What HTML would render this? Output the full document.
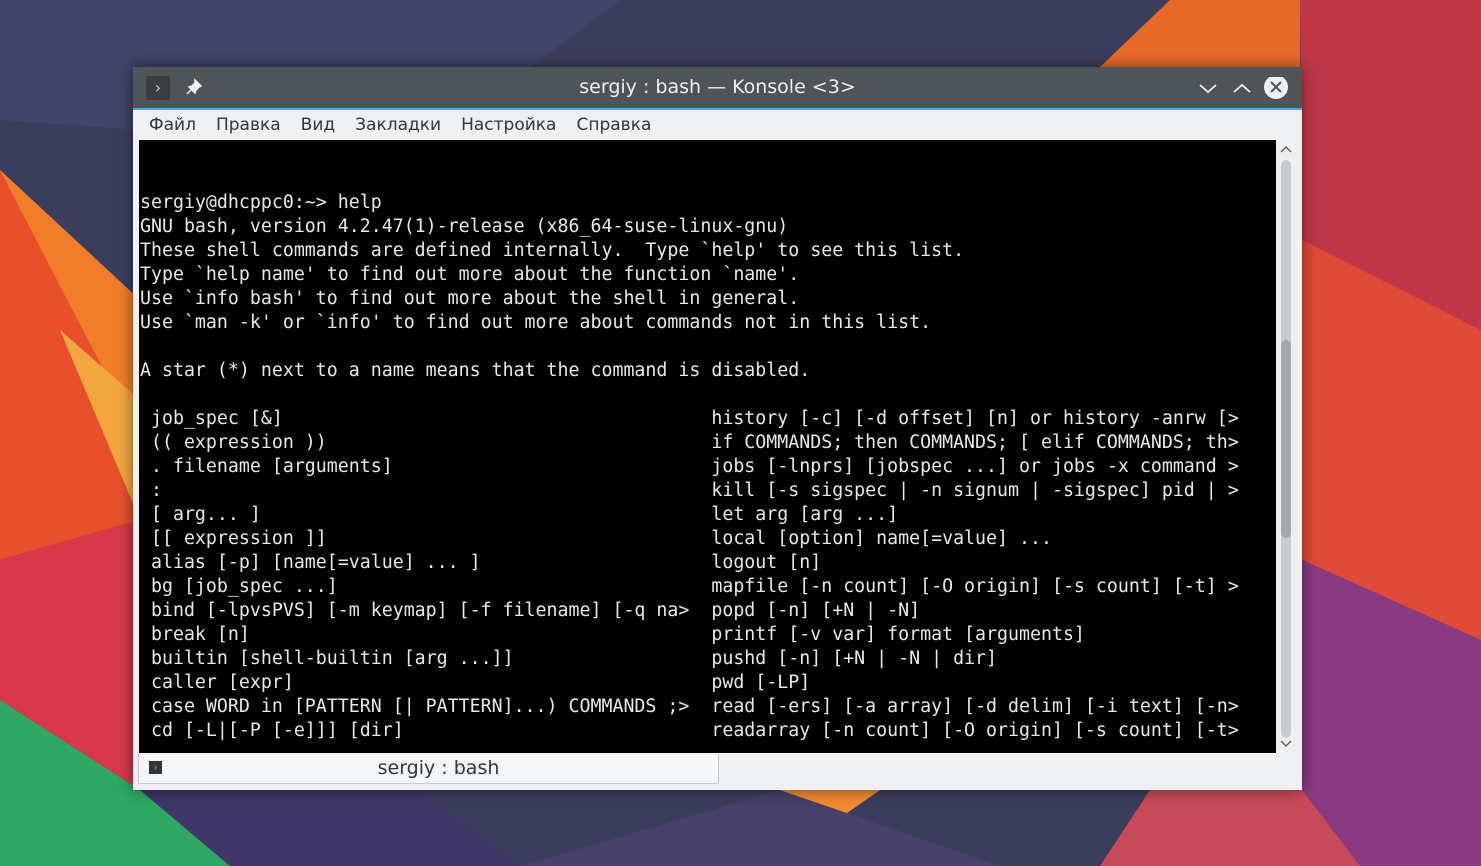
<!DOCTYPE html>
<html><head><meta charset="utf-8"><style>
html,body{margin:0;padding:0;width:1481px;height:866px;overflow:hidden;background:#3a3d5a;}
#bg{position:absolute;left:0;top:0}
.win{position:absolute;left:133px;top:67px;width:1169px;height:723px;background:#eff0f1;box-shadow:0 0 14px rgba(0,0,0,.5)}
.title{position:absolute;left:0;top:0;width:1169px;height:41px;background:#4e5457;border-bottom:2px solid #3daee9;}
.title .t{position:absolute;left:0;width:1169px;text-align:center;top:9px;color:#eff0f1;font:19px "DejaVu Sans",sans-serif}
.btn1{position:absolute;left:13px;top:9px;width:24px;height:24px;background:#3a3e41;border-radius:2px;color:#ccc;font:16px "DejaVu Sans",sans-serif;text-align:center;line-height:23px}
.menu{position:absolute;top:48px;left:16px;font:17px "DejaVu Sans",sans-serif;color:#31363b;white-space:nowrap}
.menu span{margin-right:20px}
.term{position:absolute;left:6px;top:73px;width:1137px;height:613px;background:#000;overflow:hidden}
pre{margin:0;position:absolute;font:18.25px/24px "DejaVu Sans Mono",monospace;color:#e8e8e8;top:3px;left:1px;white-space:pre}
.sb{position:absolute;left:1143px;top:73px;width:21px;height:613px}
.tab{position:absolute;left:5px;top:687px;width:579px;height:29px;border:1px solid #c8cacc;border-top:none;background:#f5f6f7;font:19px "DejaVu Sans",sans-serif;color:#31363b}
</style></head><body>
<svg id="bg" width="1481" height="866">
<rect width="1481" height="866" fill="#3b3d5c"/>
<polygon points="0,0 620,0 420,150 0,120" fill="#3f4468"/>
<polygon points="0,170 140,300 140,520 0,560" fill="#e8502c"/>
<polygon points="0,170 140,300 140,440" fill="#f07d2a"/>
<polygon points="60,330 140,400 140,520" fill="#f2a640"/>
<polygon points="0,560 140,520 140,790 0,700" fill="#d8384a"/>
<polygon points="0,700 140,790 230,866 0,866" fill="#2ea862"/>
<polygon points="230,866 140,790 420,790 520,866" fill="#3f3768"/>
<polygon points="1170,0 1300,0 1300,67 1100,67" fill="#e86a2a"/>
<polygon points="1300,0 1481,0 1481,330 1302,240" fill="#c03848"/>
<polygon points="1302,240 1481,330 1481,640 1302,560" fill="#e04a38"/>
<polygon points="1302,560 1481,640 1481,866 1302,866" fill="#8a3a80"/>
<polygon points="1150,790 1302,790 1360,866 1100,866" fill="#c84a5a"/>
<polygon points="780,790 880,790 830,825" fill="#f08a34"/>
<polygon points="520,866 780,790 1000,866" fill="#46406a"/>
</svg>
<div class="win">
 <div class="title"><div class="btn1">›</div>
  <svg style="position:absolute;left:52px;top:11px" width="18" height="18" viewBox="0 0 18 18"><path d="M10 2l6 6-2 1-3 3-1 3-6-6 3-1 3-3z M6 12l-4 4" fill="#eff0f1" stroke="#eff0f1" stroke-width="1.5"/></svg>
  <div class="t">sergiy : bash — Konsole &lt;3&gt;</div>
  <svg style="position:absolute;left:1064px;top:10px" width="100" height="22"><path d="M3 8l8 7 8-7" stroke="#eff0f1" stroke-width="1.8" fill="none"/><path d="M37 15l8-7 8 7" stroke="#eff0f1" stroke-width="1.8" fill="none"/><circle cx="79" cy="10" r="12" fill="#eff0f1"/><path d="M74 5l10 10M84 5l-10 10" stroke="#4e5457" stroke-width="2"/></svg>
 </div>
 <div class="menu"><span>Файл</span><span>Правка</span><span>Вид</span><span>Закладки</span><span>Настройка</span><span>Справка</span></div>
 <div class="term"><pre>


sergiy@dhcppc0:~&gt; help
GNU bash, version 4.2.47(1)-release (x86_64-suse-linux-gnu)
These shell commands are defined internally.  Type `help' to see this list.
Type `help name' to find out more about the function `name'.
Use `info bash' to find out more about the shell in general.
Use `man -k' or `info' to find out more about commands not in this list.

A star (*) next to a name means that the command is disabled.

 job_spec [&amp;]                                       history [-c] [-d offset] [n] or history -anrw [&gt;
 (( expression ))                                   if COMMANDS; then COMMANDS; [ elif COMMANDS; th&gt;
 . filename [arguments]                             jobs [-lnprs] [jobspec ...] or jobs -x command &gt;
 :                                                  kill [-s sigspec | -n signum | -sigspec] pid | &gt;
 [ arg... ]                                         let arg [arg ...]
 [[ expression ]]                                   local [option] name[=value] ...
 alias [-p] [name[=value] ... ]                     logout [n]
 bg [job_spec ...]                                  mapfile [-n count] [-O origin] [-s count] [-t] &gt;
 bind [-lpvsPVS] [-m keymap] [-f filename] [-q na&gt;  popd [-n] [+N | -N]
 break [n]                                          printf [-v var] format [arguments]
 builtin [shell-builtin [arg ...]]                  pushd [-n] [+N | -N | dir]
 caller [expr]                                      pwd [-LP]
 case WORD in [PATTERN [| PATTERN]...) COMMANDS ;&gt;  read [-ers] [-a array] [-d delim] [-i text] [-n&gt;
 cd [-L|[-P [-e]]] [dir]                            readarray [-n count] [-O origin] [-s count] [-t&gt;</pre></div>
 <div class="sb">
  <svg width="21" height="613"><path d="M5 12l5-5 5 5" stroke="#555" stroke-width="1.3" fill="none"/><rect x="5" y="20" width="10" height="578" rx="5" fill="#c9cbcd"/><rect x="5" y="200" width="10" height="198" rx="5" fill="#a5a8ab"/><path d="M5 601l5 5 5-5" stroke="#555" stroke-width="1.3" fill="none"/></svg>
 </div>
 <div class="tab"><div style="position:absolute;left:10px;top:7px;width:13px;height:13px;background:#31363b;color:#bbb;font:9px sans-serif;text-align:center;line-height:13px">›</div><div style="position:absolute;left:10px;width:579px;text-align:center;top:3px">sergiy : bash</div></div>
</div>
</body></html>
